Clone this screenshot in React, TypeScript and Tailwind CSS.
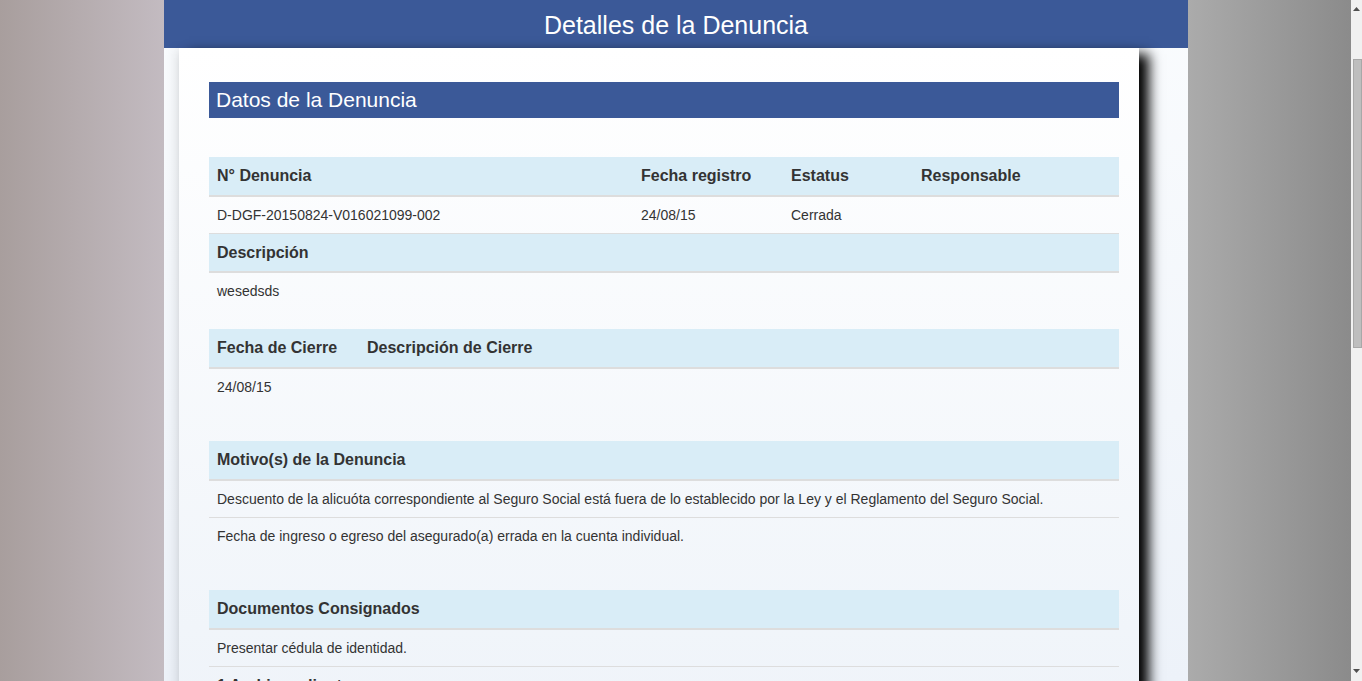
import React from "react";

const font = { fontFamily: '"Liberation Sans", Arial, sans-serif' };

function HeadRow({ cols, tmpl, top }: { cols: string[]; tmpl: string; top?: boolean }) {
  return (
    <div
      className={`grid ${tmpl} h-[40px] bg-[#d9edf7] border-b-2 border-[#dddddd] ${top ? "border-t border-t-[#dddddd]" : ""} text-[16px] font-bold text-[#333333]`}
    >
      {cols.map((c, i) => (
        <div key={i} className="px-2 flex items-center">
          {c}
        </div>
      ))}
    </div>
  );
}

function DataRow({ cols, tmpl, top }: { cols: string[]; tmpl: string; top?: boolean }) {
  return (
    <div
      className={`grid ${tmpl} ${top ? "h-[37px] border-t border-[#dddddd]" : "h-[36px]"} text-[14px] text-[#333333]`}
    >
      {cols.map((c, i) => (
        <div key={i} className="px-2 flex items-center">
          {c}
        </div>
      ))}
    </div>
  );
}

export default function App() {
  const t1 = "grid-cols-[424px_150px_130px_206px]";
  const t2 = "grid-cols-[150px_760px]";
  const t3 = "grid-cols-[910px]";
  return (
    <div className="flex w-full h-[681px] overflow-hidden" style={font}>
      <div className="w-[164px] shrink-0 bg-gradient-to-r from-[#a89e9d] to-[#c3bbc1]" />
      <div className="w-[1024px] shrink-0 flex flex-col bg-gradient-to-b from-[#fafcfe] to-[#edf2f9]">
        <div className="h-[48px] shrink-0 bg-[#3b5998] flex items-center justify-center pt-[3px] text-white text-[25px]">
          Detalles de la Denuncia
        </div>
        <div className="flex-1 pl-[15px] pb-[10px]">
          <div className="w-[960px] h-[700px] pl-[30px] pr-[20px] pt-[34px] bg-gradient-to-b from-[#ffffff] to-[#eef3f9] shadow-[10px_6px_12px_#000,-6px_0_10px_rgba(0,0,0,0.06)]">
            <div className="h-[36px] bg-[#3b5998] text-white text-[21px] flex items-center px-[7px]">
              Datos de la Denuncia
            </div>
            <div className="mt-[39px]">
              <HeadRow tmpl={t1} cols={["N° Denuncia", "Fecha registro", "Estatus", "Responsable"]} />
              <DataRow tmpl={t1} cols={["D-DGF-20150824-V016021099-002", "24/08/15", "Cerrada", ""]} />
              <HeadRow tmpl={t3} top cols={["Descripción"]} />
              <DataRow tmpl={t3} cols={["wesedsds"]} />
            </div>
            <div className="mt-[20px]">
              <HeadRow tmpl={t2} cols={["Fecha de Cierre", "Descripción de Cierre"]} />
              <DataRow tmpl={t2} cols={["24/08/15", ""]} />
            </div>
            <div className="mt-[36px]">
              <HeadRow tmpl={t3} cols={["Motivo(s) de la Denuncia"]} />
              <DataRow
                tmpl={t3}
                cols={[
                  "Descuento de la alicuóta correspondiente al Seguro Social está fuera de lo establecido por la Ley y el Reglamento del Seguro Social.",
                ]}
              />
              <DataRow tmpl={t3} top cols={["Fecha de ingreso o egreso del asegurado(a) errada en la cuenta individual."]} />
            </div>
            <div className="mt-[36px]">
              <HeadRow tmpl={t3} cols={["Documentos Consignados"]} />
              <DataRow tmpl={t3} cols={["Presentar cédula de identidad."]} />
              <div className="grid grid-cols-[910px] h-[38px] border-t border-[#dddddd] text-[16px] font-bold text-[#333333]">
                <div className="px-2 flex items-center">1 Archivo adjunto</div>
              </div>
            </div>
          </div>
        </div>
      </div>
      <div className="flex-1 bg-gradient-to-r from-[#ababab] to-[#8b8b8b]" />
      <div className="w-[11px] shrink-0 bg-[#f1f1f1] flex flex-col items-center">
        <div className="h-[59px] w-full flex justify-center pt-[7px]">
          <svg width="7" height="4" viewBox="0 0 7 4">
            <path d="M3.5 0 L7 4 L0 4 Z" fill="#505050" />
          </svg>
        </div>
        <div className="w-[9px] ml-[2px] h-[289px] bg-[#bebebe] border border-[#a8a8a8]" />
        <div className="flex-1" />
        <div className="h-[14px] w-full flex justify-center pt-[2px]">
          <svg width="7" height="4" viewBox="0 0 7 4">
            <path d="M0 0 L7 0 L3.5 4 Z" fill="#505050" />
          </svg>
        </div>
      </div>
    </div>
  );
}
